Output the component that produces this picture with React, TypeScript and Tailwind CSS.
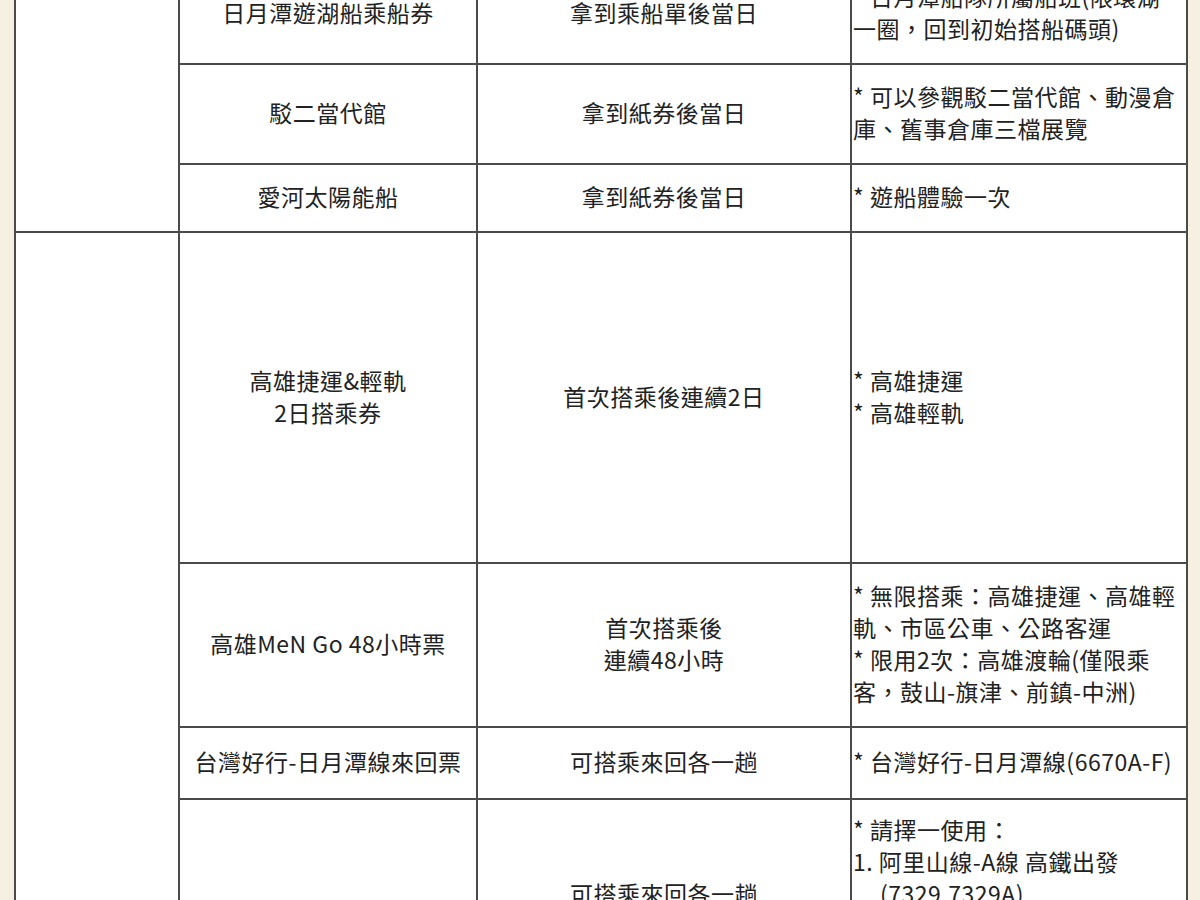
const cell = 'border-2 border-[#4a4a4a] align-middle pb-[4px]'

type Row = {
    name: React.ReactNode
    period: React.ReactNode
    detail: React.ReactNode
    height: string
}

const groupOne: Row[] = [
    {
        name: '日月潭遊湖船乘船券',
        period: '拿到乘船單後當日',
        detail: (
            <>
                * 日月潭船隊所屬船班(限環湖
                <br />
                一圈，回到初始搭船碼頭)
            </>
        ),
        height: 'h-[100px]',
    },
    {
        name: '駁二當代館',
        period: '拿到紙券後當日',
        detail: '* 可以參觀駁二當代館、動漫倉庫、舊事倉庫三檔展覽',
        height: 'h-[100px]',
    },
    {
        name: '愛河太陽能船',
        period: '拿到紙券後當日',
        detail: '* 遊船體驗一次',
        height: 'h-[68px]',
    },
]

const groupTwo: Row[] = [
    {
        name: (
            <>
                高雄捷運&amp;輕軌
                <br />
                2日搭乘券
            </>
        ),
        period: '首次搭乘後連續2日',
        detail: (
            <>
                * 高雄捷運
                <br />* 高雄輕軌
            </>
        ),
        height: 'h-[331px]',
    },
    {
        name: '高雄MeN Go 48小時票',
        period: (
            <>
                首次搭乘後
                <br />
                連續48小時
            </>
        ),
        detail: (
            <>
                * 無限搭乘：高雄捷運、高雄輕軌、市區公車、公路客運
                <br />* 限用2次：高雄渡輪(僅限乘客，鼓山-旗津、前鎮-中洲)
            </>
        ),
        height: 'h-[164px]',
    },
    {
        name: '台灣好行-日月潭線來回票',
        period: '可搭乘來回各一趟',
        detail: '* 台灣好行-日月潭線(6670A-F)',
        height: 'h-[72px]',
    },
    {
        name: '',
        period: '可搭乘來回各一趟',
        detail: (
            <>
                * 請擇一使用：
                <br />
                1. 阿里山線-A線 高鐵出發
                <span className="block pl-[27px]">(7329,7329A)</span>
                2. 阿里山線-B線 嘉義出發
                <span className="block pl-[27px]">(7322,7322A)</span>
            </>
        ),
        height: 'h-[192px]',
    },
]

function TicketRow({ row, lead }: { row: Row; lead?: React.ReactNode }) {
    return (
        <tr className={row.height}>
            {lead}
            <td className={`${cell} text-center`}>{row.name}</td>
            <td className={`${cell} text-center`}>{row.period}</td>
            <td className={`${cell} pl-px text-left`}>{row.detail}</td>
        </tr>
    )
}

export default function App() {
    return (
        <div className="h-[900px] overflow-hidden bg-[#f5f0e2] px-[14px]">
            <table
                className="-mt-[37px] w-[1172px] table-fixed border-collapse bg-white text-[23px] leading-[32px] tracking-[0.5px] text-[#222]"
                style={{ fontFamily: '"Noto Sans CJK TC", "Noto Sans", sans-serif' }}
            >
                <colgroup>
                    <col className="w-[164px]" />
                    <col className="w-[298px]" />
                    <col className="w-[374px]" />
                    <col className="w-[336px]" />
                </colgroup>
                <tbody>
                    {groupOne.map((row, i) => (
                        <TicketRow
                            key={i}
                            row={row}
                            lead={i === 0 ? <td rowSpan={groupOne.length} className={cell} /> : undefined}
                        />
                    ))}
                    {groupTwo.map((row, i) => (
                        <TicketRow
                            key={i}
                            row={row}
                            lead={i === 0 ? <td rowSpan={groupTwo.length} className={cell} /> : undefined}
                        />
                    ))}
                </tbody>
            </table>
        </div>
    )
}
